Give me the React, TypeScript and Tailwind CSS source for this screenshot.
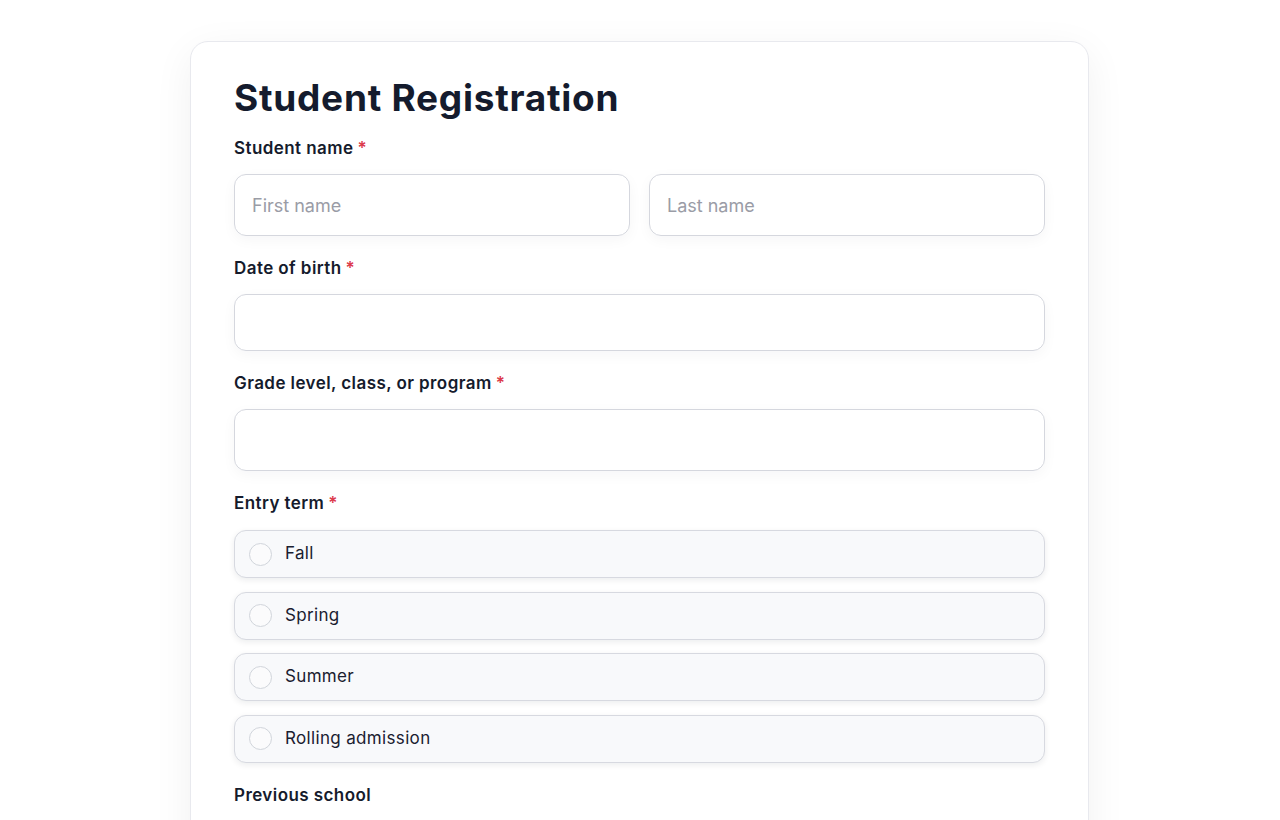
import React from "react";

function Label({ children, required, mb = "mb-[14px]" }: { children: React.ReactNode; required?: boolean; mb?: string }) {
  return (
    <div className={`${mb} text-[17px] leading-6 font-semibold tracking-[0.025em] text-[#151b2c]`}>
      {children}
      {required && <span className="ml-1 text-[#dc3a4b]">*</span>}
    </div>
  );
}

function Radio({ label }: { label: string }) {
  return (
    <label className="flex h-12 items-center rounded-xl border border-[#d7d9e0] bg-[#f8f9fb] px-[14px] shadow-[0_2px_6px_rgba(17,24,39,0.08)]">
      <span className="h-[23px] w-[23px] rounded-full border border-[#d1d5db] bg-white/40" />
      <span className="ml-[13px] text-[17px] tracking-[0.02em] text-[#1a2030]">{label}</span>
    </label>
  );
}

const inputCls =
  "h-[62px] rounded-xl border border-[#d5d7de] px-[17px] text-[18px] text-[#1a2030] placeholder:text-[#9a9ca6] outline-none shadow-[0_4px_14px_rgba(17,24,39,0.04)]";

export default function App() {
  return (
    <div className="min-h-screen bg-white" style={{ fontFamily: "Inter, 'Noto Sans', sans-serif" }}>
      <div className="pt-[41px] flex justify-center">
        <div className="w-[899px] -ml-[1px] rounded-[18px] border border-[#e8e9ee] bg-white px-[43px] pt-[34px] pb-10 shadow-[0_10px_40px_rgba(17,24,39,0.06)]">
          <h1 className="text-[37px] leading-[44px] font-bold text-[#141b2d] tracking-[0.02em]">Student Registration</h1>
          <div className="mt-[16px] flex flex-col gap-5">
            <div>
              <Label required>Student name</Label>
              <div className="grid grid-cols-2 gap-[19px]">
                <input placeholder="First name" className={inputCls} />
                <input placeholder="Last name" className={inputCls} />
              </div>
            </div>
            <div>
              <Label required>Date of birth</Label>
              <div className="h-[57px] rounded-xl border border-[#d5d7de] shadow-[0_4px_14px_rgba(17,24,39,0.04)]" />
            </div>
            <div>
              <Label required>Grade level, class, or program</Label>
              <div className="h-[62px] rounded-xl border border-[#d5d7de] shadow-[0_4px_14px_rgba(17,24,39,0.04)]" />
            </div>
            <div>
              <Label required mb="mb-[15px]">Entry term</Label>
              <div className="flex flex-col gap-[13.5px]">
                <Radio label="Fall" />
                <Radio label="Spring" />
                <Radio label="Summer" />
                <Radio label="Rolling admission" />
              </div>
            </div>
            <div>
              <Label>Previous school</Label>
              <div className="h-[62px] rounded-xl border border-[#d5d7de]" />
            </div>
          </div>
        </div>
      </div>
    </div>
  );
}
